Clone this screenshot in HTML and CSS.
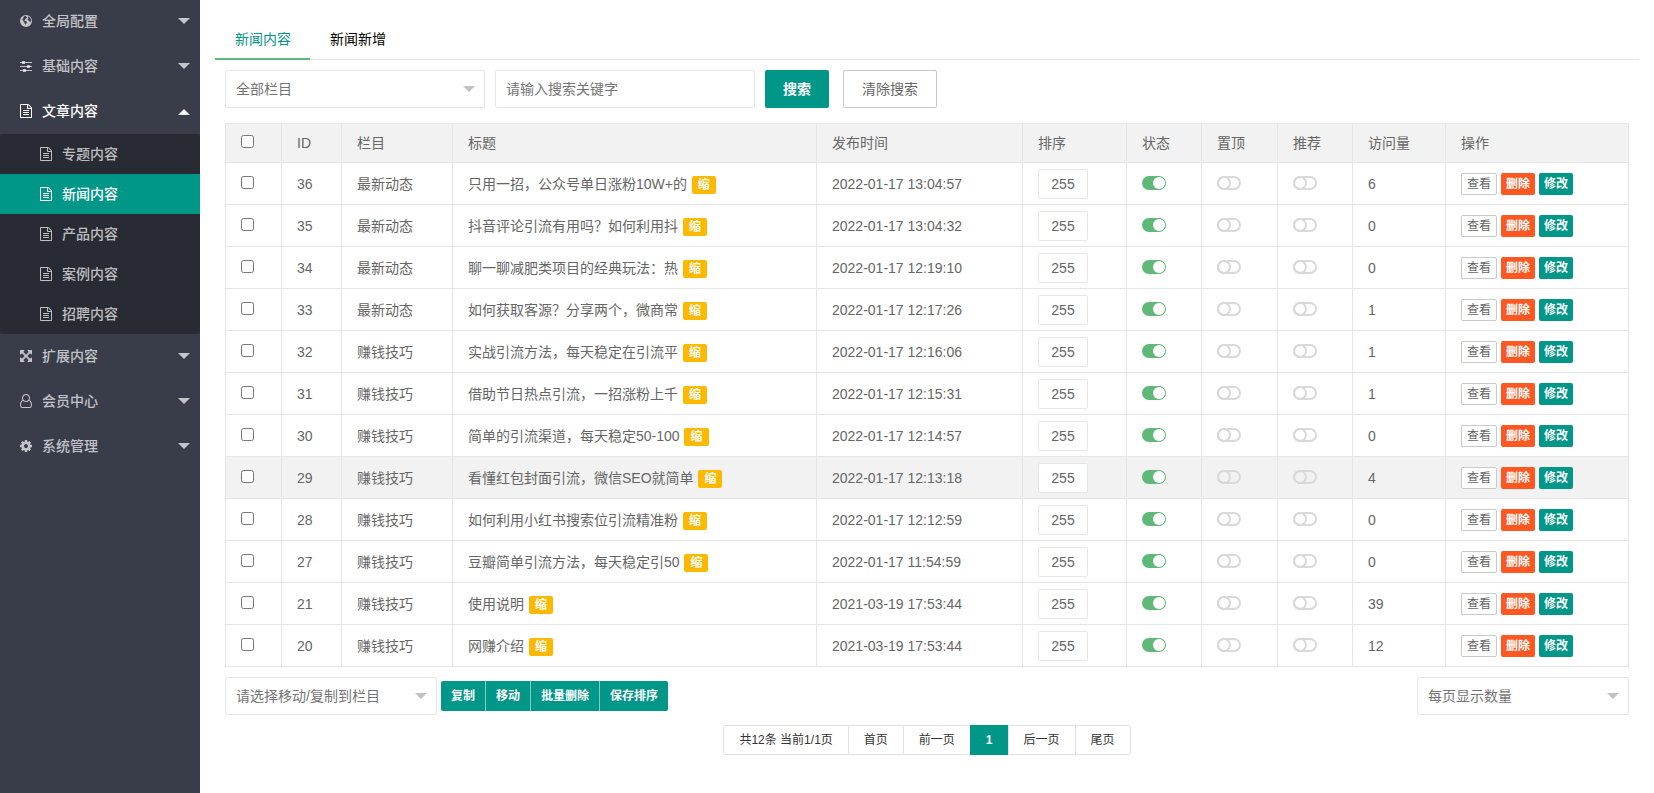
FILE: index.html
```html
<!DOCTYPE html>
<html lang="zh-CN">
<head>
<meta charset="utf-8">
<title>新闻内容</title>
<link rel="stylesheet" href="styles.css">
</head>
<body>
<svg class="sprite" aria-hidden="true">
  <symbol id="i-globe" viewBox="0 0 1536 1536"><path fill-rule="evenodd" d="M768 0a768 768 0 1 0 0 1536a768 768 0 1 0 0-1536zM480 200L640 130L800 130L760 230L860 260L900 360L780 400L700 500L600 560L640 640L560 680L640 760L800 800L880 900L840 1040L760 1120L700 1260L620 1180L600 1000L500 880L420 720L320 620L340 480L440 380zM1000 180L1180 260L1320 420L1400 600L1400 800L1320 900L1220 860L1180 720L1060 680L960 600L1000 480L1100 440L1040 340z"/></symbol>
  <symbol id="i-sliders" viewBox="0 0 1536 1792"><path d="M0 384h1536v128H0zM0 896h1536v128H0zM0 1408h1536v128H0z"/><rect x="256" y="256" width="384" height="384" rx="64"/><rect x="896" y="768" width="384" height="384" rx="64"/><rect x="384" y="1280" width="384" height="384" rx="64"/></symbol>
  <symbol id="i-file" viewBox="0 0 1536 1792"><path d="M1468 380q28 28 48 76t20 88v1152q0 40-28 68t-68 28H96q-40 0-68-28t-28-68V96q0-40 28-68T96 0h896q40 0 88 20t76 48zm-444-244v376h376q-10-29-22-41l-313-313q-12-12-41-22zm384 1528V640H992q-40 0-68-28t-28-68V128H128v1536zM384 800q0-14 9-23t23-9h704q14 0 23 9t9 23v64q0 14-9 23t-23 9H416q-14 0-23-9t-9-23zm736 224q14 0 23 9t9 23v64q0 14-9 23t-23 9H416q-14 0-23-9t-9-23v-64q0-14 9-23t23-9zm0 256q14 0 23 9t9 23v64q0 14-9 23t-23 9H416q-14 0-23-9t-9-23v-64q0-14 9-23t23-9z"/></symbol>
  <symbol id="i-expand" viewBox="0 0 1536 1536"><path d="M1283 413L928 768l355 355 144-144q29-31 70-14 39 17 39 59v448q0 26-19 45t-45 19h-448q-42 0-59-40-17-39 14-69l144-144-355-355-355 355 144 144q31 30 14 69-17 40-59 40H64q-26 0-45-19t-19-45v-448q0-42 40-59 39-17 69 14l144 144 355-355-355-355-144 144q-19 19-45 19-12 0-24-5-40-17-40-59V64q0-26 19-45T64 0h448q42 0 59 40 17 39-14 69L413 253l355 355 355-355-144-144q-31-30-14-69 17-40 59-40h448q26 0 45 19t19 45v448q0 42-39 59-13 5-25 5-26 0-45-19z"/></symbol>
  <symbol id="i-user" viewBox="0 0 1536 1792"><path d="M1201 784q47 14 89.500 38t89 73 79.500 115.500 55 172 22 236.500q0 154-100 263.500T1195 1792H341q-141 0-241-109.500T0 1419q0-131 22-236.500t55-172T156.500 895t89-73T335 784q-79-125-79-272 0-104 40.500-198.500T406 150 569.500 40.500 768 0t198.500 40.500T1130 150t109.500 163.500T1280 512q0 147-79 272zM768 128q-159 0-271.500 112.500T384 512t112.500 271.500T768 896t271.500-112.500T1152 512t-112.500-271.500T768 128zm427 1536q88 0 150.500-71.500T1408 1419q0-239-78.500-377T1104 897q-145 127-336 127T432 897q-147 7-225.500 145T128 1419q0 102 62.500 173.500T341 1664h854z"/></symbol>
  <symbol id="i-cog" viewBox="0 0 1536 1536"><path d="M1024 768q0-106-75-181t-181-75-181 75-75 181 75 181 181 75 181-75 75-181zm512-109v222q0 12-8 23t-20 13l-185 28q-19 54-39 91 35 50 107 138 10 12 10 25t-9 23q-27 37-99 108t-94 71q-12 0-26-9l-138-108q-44 23-91 38-16 136-29 186-7 28-36 28H657q-14 0-24.500-8.500T621 1506l-28-184q-49-16-90-37l-141 107q-10 9-25 9-14 0-25-11-126-114-165-168-7-10-7-23 0-12 8-23 15-21 51-66.500t54-70.500q-27-50-41-99L29 913q-13-2-21-12.500T0 877V655q0-12 8-23t19-13l186-28q14-46 39-92-40-57-107-138-10-12-10-24 0-10 9-23 26-36 98.500-107.500T337 135q13 0 26 10l138 107q44-23 91-38 16-136 29-186 7-28 36-28h222q14 0 24.500 8.500T915 30l28 184q49 16 90 37l142-107q9-9 24-9 13 0 25 10 129 119 165 170 7 8 7 22 0 12-8 23-15 21-51 66.500t-54 70.500q26 50 41 98l183 28q13 2 21 12.500t8 23.500z"/></symbol>
</svg>

<div class="layout">
  <nav class="side">
    <ul class="menu">
      <li><a class="menu-link" href="#"><svg class="icon"><use href="#i-globe"/></svg>全局配置<span class="caret"></span></a></li>
      <li><a class="menu-link" href="#"><svg class="icon"><use href="#i-sliders"/></svg>基础内容<span class="caret"></span></a></li>
      <li>
        <a class="menu-link open" href="#"><svg class="icon"><use href="#i-file"/></svg>文章内容<span class="caret"></span></a>
        <ul class="submenu">
          <li><a class="sub-link" href="#"><svg class="icon"><use href="#i-file"/></svg>专题内容</a></li>
          <li><a class="sub-link current" href="#"><svg class="icon"><use href="#i-file"/></svg>新闻内容</a></li>
          <li><a class="sub-link" href="#"><svg class="icon"><use href="#i-file"/></svg>产品内容</a></li>
          <li><a class="sub-link" href="#"><svg class="icon"><use href="#i-file"/></svg>案例内容</a></li>
          <li><a class="sub-link" href="#"><svg class="icon"><use href="#i-file"/></svg>招聘内容</a></li>
        </ul>
      </li>
      <li><a class="menu-link" href="#"><svg class="icon"><use href="#i-expand"/></svg>扩展内容<span class="caret"></span></a></li>
      <li><a class="menu-link" href="#"><svg class="icon"><use href="#i-user"/></svg>会员中心<span class="caret"></span></a></li>
      <li><a class="menu-link" href="#"><svg class="icon"><use href="#i-cog"/></svg>系统管理<span class="caret"></span></a></li>
    </ul>
  </nav>

  <main class="main">
    <div class="tabs">
      <a class="tab active" href="#">新闻内容</a>
      <a class="tab" href="#">新闻新增</a>
    </div>

    <div class="content">
      <form class="search">
        <div class="select-wrap wide"><select class="field" aria-label="栏目"><option>全部栏目</option></select></div>
        <input class="field keyword" type="text" placeholder="请输入搜索关键字" aria-label="搜索关键字">
        <button class="btn" type="button">搜索</button>
        <button class="btn outline clear" type="button">清除搜索</button>
      </form>

      <table class="grid">
        <colgroup>
          <col class="c-check"><col class="c-id"><col class="c-cat"><col><col class="c-time"><col class="c-sort"><col class="c-flag"><col class="c-top"><col class="c-flag"><col class="c-visits"><col class="c-ops">
        </colgroup>
        <thead>
          <tr><th><input class="check" type="checkbox" aria-label="全选"></th><th>ID</th><th>栏目</th><th>标题</th><th>发布时间</th><th>排序</th><th>状态</th><th>置顶</th><th>推荐</th><th>访问量</th><th>操作</th></tr>
        </thead>
        <tbody>
          <tr><td><input class="check" type="checkbox" aria-label="选择 36"></td><td>36</td><td>最新动态</td><td>只用一招，公众号单日涨粉10W+的 <span class="badge">缩</span></td><td>2022-01-17 13:04:57</td><td><input class="sort" type="text" value="255" aria-label="排序"></td><td><input class="switch" type="checkbox" checked aria-label="状态"></td><td><input class="switch" type="checkbox" aria-label="置顶"></td><td><input class="switch" type="checkbox" aria-label="推荐"></td><td>6</td><td><div class="ops"><button class="mini outline">查看</button><button class="mini danger">删除</button><button class="mini">修改</button></div></td></tr>
          <tr><td><input class="check" type="checkbox" aria-label="选择 35"></td><td>35</td><td>最新动态</td><td>抖音评论引流有用吗？如何利用抖 <span class="badge">缩</span></td><td>2022-01-17 13:04:32</td><td><input class="sort" type="text" value="255" aria-label="排序"></td><td><input class="switch" type="checkbox" checked aria-label="状态"></td><td><input class="switch" type="checkbox" aria-label="置顶"></td><td><input class="switch" type="checkbox" aria-label="推荐"></td><td>0</td><td><div class="ops"><button class="mini outline">查看</button><button class="mini danger">删除</button><button class="mini">修改</button></div></td></tr>
          <tr><td><input class="check" type="checkbox" aria-label="选择 34"></td><td>34</td><td>最新动态</td><td>聊一聊减肥类项目的经典玩法：热 <span class="badge">缩</span></td><td>2022-01-17 12:19:10</td><td><input class="sort" type="text" value="255" aria-label="排序"></td><td><input class="switch" type="checkbox" checked aria-label="状态"></td><td><input class="switch" type="checkbox" aria-label="置顶"></td><td><input class="switch" type="checkbox" aria-label="推荐"></td><td>0</td><td><div class="ops"><button class="mini outline">查看</button><button class="mini danger">删除</button><button class="mini">修改</button></div></td></tr>
          <tr><td><input class="check" type="checkbox" aria-label="选择 33"></td><td>33</td><td>最新动态</td><td>如何获取客源？分享两个，微商常 <span class="badge">缩</span></td><td>2022-01-17 12:17:26</td><td><input class="sort" type="text" value="255" aria-label="排序"></td><td><input class="switch" type="checkbox" checked aria-label="状态"></td><td><input class="switch" type="checkbox" aria-label="置顶"></td><td><input class="switch" type="checkbox" aria-label="推荐"></td><td>1</td><td><div class="ops"><button class="mini outline">查看</button><button class="mini danger">删除</button><button class="mini">修改</button></div></td></tr>
          <tr><td><input class="check" type="checkbox" aria-label="选择 32"></td><td>32</td><td>赚钱技巧</td><td>实战引流方法，每天稳定在引流平 <span class="badge">缩</span></td><td>2022-01-17 12:16:06</td><td><input class="sort" type="text" value="255" aria-label="排序"></td><td><input class="switch" type="checkbox" checked aria-label="状态"></td><td><input class="switch" type="checkbox" aria-label="置顶"></td><td><input class="switch" type="checkbox" aria-label="推荐"></td><td>1</td><td><div class="ops"><button class="mini outline">查看</button><button class="mini danger">删除</button><button class="mini">修改</button></div></td></tr>
          <tr><td><input class="check" type="checkbox" aria-label="选择 31"></td><td>31</td><td>赚钱技巧</td><td>借助节日热点引流，一招涨粉上千 <span class="badge">缩</span></td><td>2022-01-17 12:15:31</td><td><input class="sort" type="text" value="255" aria-label="排序"></td><td><input class="switch" type="checkbox" checked aria-label="状态"></td><td><input class="switch" type="checkbox" aria-label="置顶"></td><td><input class="switch" type="checkbox" aria-label="推荐"></td><td>1</td><td><div class="ops"><button class="mini outline">查看</button><button class="mini danger">删除</button><button class="mini">修改</button></div></td></tr>
          <tr><td><input class="check" type="checkbox" aria-label="选择 30"></td><td>30</td><td>赚钱技巧</td><td>简单的引流渠道，每天稳定50-100 <span class="badge">缩</span></td><td>2022-01-17 12:14:57</td><td><input class="sort" type="text" value="255" aria-label="排序"></td><td><input class="switch" type="checkbox" checked aria-label="状态"></td><td><input class="switch" type="checkbox" aria-label="置顶"></td><td><input class="switch" type="checkbox" aria-label="推荐"></td><td>0</td><td><div class="ops"><button class="mini outline">查看</button><button class="mini danger">删除</button><button class="mini">修改</button></div></td></tr>
          <tr class="hovered"><td><input class="check" type="checkbox" aria-label="选择 29"></td><td>29</td><td>赚钱技巧</td><td>看懂红包封面引流，微信SEO就简单 <span class="badge">缩</span></td><td>2022-01-17 12:13:18</td><td><input class="sort" type="text" value="255" aria-label="排序"></td><td><input class="switch" type="checkbox" checked aria-label="状态"></td><td><input class="switch" type="checkbox" aria-label="置顶"></td><td><input class="switch" type="checkbox" aria-label="推荐"></td><td>4</td><td><div class="ops"><button class="mini outline">查看</button><button class="mini danger">删除</button><button class="mini">修改</button></div></td></tr>
          <tr><td><input class="check" type="checkbox" aria-label="选择 28"></td><td>28</td><td>赚钱技巧</td><td>如何利用小红书搜索位引流精准粉 <span class="badge">缩</span></td><td>2022-01-17 12:12:59</td><td><input class="sort" type="text" value="255" aria-label="排序"></td><td><input class="switch" type="checkbox" checked aria-label="状态"></td><td><input class="switch" type="checkbox" aria-label="置顶"></td><td><input class="switch" type="checkbox" aria-label="推荐"></td><td>0</td><td><div class="ops"><button class="mini outline">查看</button><button class="mini danger">删除</button><button class="mini">修改</button></div></td></tr>
          <tr><td><input class="check" type="checkbox" aria-label="选择 27"></td><td>27</td><td>赚钱技巧</td><td>豆瓣简单引流方法，每天稳定引50 <span class="badge">缩</span></td><td>2022-01-17 11:54:59</td><td><input class="sort" type="text" value="255" aria-label="排序"></td><td><input class="switch" type="checkbox" checked aria-label="状态"></td><td><input class="switch" type="checkbox" aria-label="置顶"></td><td><input class="switch" type="checkbox" aria-label="推荐"></td><td>0</td><td><div class="ops"><button class="mini outline">查看</button><button class="mini danger">删除</button><button class="mini">修改</button></div></td></tr>
          <tr><td><input class="check" type="checkbox" aria-label="选择 21"></td><td>21</td><td>赚钱技巧</td><td>使用说明 <span class="badge">缩</span></td><td>2021-03-19 17:53:44</td><td><input class="sort" type="text" value="255" aria-label="排序"></td><td><input class="switch" type="checkbox" checked aria-label="状态"></td><td><input class="switch" type="checkbox" aria-label="置顶"></td><td><input class="switch" type="checkbox" aria-label="推荐"></td><td>39</td><td><div class="ops"><button class="mini outline">查看</button><button class="mini danger">删除</button><button class="mini">修改</button></div></td></tr>
          <tr><td><input class="check" type="checkbox" aria-label="选择 20"></td><td>20</td><td>赚钱技巧</td><td>网赚介绍 <span class="badge">缩</span></td><td>2021-03-19 17:53:44</td><td><input class="sort" type="text" value="255" aria-label="排序"></td><td><input class="switch" type="checkbox" checked aria-label="状态"></td><td><input class="switch" type="checkbox" aria-label="置顶"></td><td><input class="switch" type="checkbox" aria-label="推荐"></td><td>12</td><td><div class="ops"><button class="mini outline">查看</button><button class="mini danger">删除</button><button class="mini">修改</button></div></td></tr>
        </tbody>
      </table>

      <div class="bulk">
        <div class="select-wrap"><select class="field" aria-label="目标栏目"><option>请选择移动/复制到栏目</option></select></div>
        <div class="btn-group"><button>复制</button><button>移动</button><button>批量删除</button><button>保存排序</button></div>
        <div class="select-wrap end"><select class="field" aria-label="每页显示数量"><option>每页显示数量</option></select></div>
      </div>

      <div class="pager"><span class="page">共12条 当前1/1页</span><a class="page" href="#">首页</a><a class="page" href="#">前一页</a><a class="page now" href="#">1</a><a class="page" href="#">后一页</a><a class="page" href="#">尾页</a></div>
    </div>
  </main>
</div>
</body>
</html>
```
FILE: styles.css
```css
*, *::before { box-sizing: border-box; }

body {
  margin: 0;
  font: 14px/24px "Liberation Sans", "Noto Sans CJK SC", sans-serif;
  color: #333;
  background: #fff;
}

button, input, select { font: inherit; margin: 0; }
button { cursor: pointer; }
a { color: inherit; text-decoration: none; }
ul { margin: 0; padding: 0; list-style: none; }
.sprite { display: none; }

.layout { display: flex; min-height: 100vh; }

/* sidebar */
.side { width: 200px; flex: none; background: #393d49; }
.menu { margin-top: -1px; }

.menu-link, .sub-link {
  display: flex;
  align-items: center;
  color: rgba(255, 255, 255, .7);
  font-weight: 500;
}
.menu-link { height: 45px; padding: 0 10px 2px 20px; }
.menu-link.open { color: #fff; }
.sub-link { height: 40px; padding-left: 40px; }
.sub-link.current { background: #009688; color: #fff; }
.submenu { background: #282b33; border-radius: 2px; }

.icon { width: 12px; height: 14px; margin-right: 10px; fill: currentColor; }

.caret {
  margin-left: auto;
  border: 6px solid transparent;
  border-top-color: currentColor;
  border-bottom-width: 0;
}
.open .caret { margin-top: 2px; border-top-width: 0; border-bottom: 6px solid; }

/* tabs */
.main { flex: 1; min-width: 0; padding: 20px 15px; }

.tabs { display: flex; height: 40px; border-bottom: 1px solid #e6e6e6; }
.tab { height: 40px; padding: 0 19px 0 20px; line-height: 38px; color: #000; }
.tab.active { color: #009688; border-bottom: 2px solid #5fb878; }

.content { padding: 10px; }

/* form controls */
.field {
  width: 100%;
  height: 38px;
  padding: 0 10px;
  border: 1px solid #e6e6e6;
  border-radius: 2px;
  background: #fff;
  color: #757575;
  appearance: none;
}
.field::placeholder { color: #757575; }

.select-wrap { position: relative; width: 212px; }
.select-wrap.wide, .keyword { width: 260px; }
.select-wrap::after {
  content: "";
  position: absolute;
  right: 10px;
  top: 16px;
  border: 6px solid transparent;
  border-top-color: #c2c2c2;
  border-bottom-width: 0;
  pointer-events: none;
}

.search { display: flex; gap: 10px; margin-bottom: 15px; }

.btn {
  height: 38px;
  padding: 0 18px;
  border: 0;
  border-radius: 2px;
  background: #009688;
  color: #fff;
  font-weight: 700;
}
.btn.outline { border: 1px solid #c9c9c9; background: #fff; color: #666; font-weight: 400; }
.clear { margin-left: 4px; }

/* table */
.grid { width: 100%; table-layout: fixed; border-collapse: collapse; color: #666; }
.c-check { width: 56px; }
.c-id { width: 60px; }
.c-cat { width: 111px; }
.c-time { width: 206px; }
.c-sort { width: 104px; }
.c-flag { width: 75px; }
.c-top { width: 76px; }
.c-visits { width: 93px; }
.c-ops { width: 183px; }

.grid th, .grid td {
  height: 42px;
  padding: 0 15px;
  border: 1px solid #e6e6e6;
  font-weight: 400;
  text-align: left;
  white-space: nowrap;
}
.grid th { height: 39px; background: #f2f2f2; }
.hovered { background: #f2f2f2; }

.check { display: block; width: 13px; height: 13px; margin-bottom: 3px; }

.sort {
  display: block;
  width: 50px;
  height: 30px;
  padding: 0;
  border: 1px solid #e6e6e6;
  border-radius: 2px;
  color: #666;
  text-align: center;
}

.switch {
  display: block;
  position: relative;
  width: 24px;
  height: 14px;
  margin-bottom: 2px;
  border: 2px solid #d9d9d9;
  border-radius: 7px;
  appearance: none;
}
.switch::before {
  content: "";
  position: absolute;
  left: -2px;
  top: -2px;
  width: 14px;
  height: 14px;
  border: 2px solid #d9d9d9;
  border-radius: 50%;
}
.switch:checked { background: #5fb878; border-color: #5fb878; }
.switch:checked::before {
  left: 9px;
  top: -1px;
  width: 12px;
  height: 12px;
  border: 0;
  background: #fff;
}

.badge {
  display: inline-block;
  margin-left: 1px;
  padding: 0 6px;
  border-radius: 2px;
  background: #ffb800;
  color: #fff;
  font-size: 12px;
  font-weight: 700;
  line-height: 18px;
}

.ops { display: flex; gap: 4px; }
.mini {
  height: 22px;
  padding: 0 5px;
  border: 0;
  border-radius: 2px;
  background: #009688;
  color: #fff;
  font-size: 12px;
  font-weight: 700;
  line-height: 20px;
}
.mini.danger { background: #ff5722; }
.mini.outline { border: 1px solid #c9c9c9; background: #fff; color: #666; font-weight: 400; }

/* bulk actions */
.bulk { display: flex; align-items: center; gap: 4px; margin-top: 10px; }
.end { margin-left: auto; }

.btn-group { display: flex; border-radius: 2px; overflow: hidden; }
.btn-group button {
  height: 30px;
  padding: 0 10px;
  border: 0;
  background: #009688;
  color: #fff;
  font-size: 12px;
  font-weight: 700;
}
.btn-group button + button { border-left: 1px solid rgba(255, 255, 255, .5); }

/* pagination */
.pager { display: flex; justify-content: center; margin-top: 10px; }
.page {
  height: 30px;
  padding: 0 15px;
  border: 1px solid #e2e2e2;
  font-size: 12px;
  line-height: 28px;
}
.page + .page { margin-left: -1px; }
.page:first-child { border-radius: 2px 0 0 2px; }
.page:last-child { border-radius: 0 2px 2px 0; }
.page.now { background: #009688; border-color: #009688; color: #fff; font-weight: 700; }
```
